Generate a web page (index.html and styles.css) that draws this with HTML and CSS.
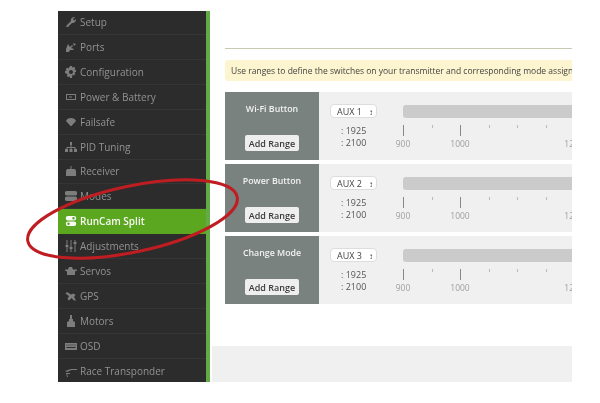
FILE: index.html
```html
<!DOCTYPE html>
<html lang="en">
<head>
<meta charset="utf-8">
<title>RunCam Split modes</title>
<link rel="stylesheet" href="styles.css">
</head>
<body>
<div class="frame">
  <nav class="sidebar">
    <div class="item"><svg class="icon" viewBox="0 0 12 12"><path d="M1 11l1-2 4-4c-.5-2 1-4 4-4L8 3l1 1.500L11 3c0 3-2 4.500-4 4l-4 4z"/></svg>Setup</div>
    <div class="item"><svg class="icon" viewBox="0 0 12 12"><path d="M1 11V8l2-5 2 3 2-2 1 1-2 2 3 1-1 1H5l-1 2z"/><path d="M8 2l3 1-2 2z"/></svg>Ports</div>
    <div class="item"><svg class="icon" viewBox="0 0 12 12"><path fill-rule="evenodd" d="M5 0h2l.4 1.700 1.500-.9 1.400 1.400-.9 1.500 1.600.4v2l-1.600.4.9 1.500-1.400 1.400-1.500-.9L7 12H5l-.4-1.700-1.500.9-1.400-1.400.9-1.500L0 7V5l1.600-.4-.9-1.500 1.400-1.400 1.500.9zM6 4a2 2 0 100 4 2 2 0 000-4z"/></svg>Configuration</div>
    <div class="item"><svg class="icon" viewBox="0 0 12 12"><path fill-rule="evenodd" d="M1 3h10v6H1zM2 4v4h8V4z"/><path d="M4 5.500h3v1H4z"/></svg>Power &amp; Battery</div>
    <div class="item"><svg class="icon" viewBox="0 0 12 12"><path d="M1 5c1-4 9-4 10 0l-4.500 5h-1z"/></svg>Failsafe</div>
    <div class="item"><svg class="icon" viewBox="0 0 12 12"><path d="M5 1h2v3H5zM5.500 4h1v2h4v2h-1V7h-3v1h-1V7h-3v1h-1V6h4z"/><path d="M0 8h3v3H0zM4.500 8h3v3h-3zM9 8h3v3H9z"/></svg>PID Tuning</div>
    <div class="item"><svg class="icon" viewBox="0 0 12 12"><path d="M5.500 1h1v3h-1z"/><path d="M2 4h8l1 2v5H1V6z"/></svg>Receiver</div>
    <div class="item"><svg class="icon" viewBox="0 0 12 12"><path d="M2 1h8a2 2 0 010 4.500H2a2 2 0 010-4.500zM2 6.500h8a2 2 0 010 4.500H2a2 2 0 010-4.500z"/></svg>Modes</div>
    <div class="item active"><svg class="icon" viewBox="0 0 12 12"><path fill-rule="evenodd" d="M3 1h6a2.200 2.200 0 010 4.500H3A2.200 2.200 0 013 1zM8.500 2a1.200 1.200 0 100 2.500 1.200 1.200 0 000-2.500zM3 6.500h6A2.200 2.200 0 019 11H3a2.200 2.200 0 010-4.500zM3.500 7.500a1.200 1.200 0 100 2.500 1.200 1.200 0 000-2.500z"/></svg>RunCam Split</div>
    <div class="item"><svg class="icon" viewBox="0 0 12 12"><path d="M1.500 0h1v5h1v2h-1v5h-1V7H.5V5h1zM5.500 0h1v7h1v2h-1v3h-1V9h-1V7h1zM9.500 0h1v2h1v2h-1v8h-1V4h-1V2h1z"/></svg>Adjustments</div>
    <div class="item"><svg class="icon" viewBox="0 0 12 12"><path d="M4 2h3l1 2.500h4v1l-2 1V10H2V6.500l-2-1v-1h3z"/></svg>Servos</div>
    <div class="item"><svg class="icon" viewBox="0 0 12 12"><path d="M2 2l4 2.500 2.500-1L10.500 5 9 7l2 3.500H9L6.500 8 4 10.500 2.500 9 4 6 .5 3.500z"/></svg>GPS</div>
    <div class="item"><svg class="icon" viewBox="0 0 12 12"><path d="M5 0h2v4h1v2l2 1v5H2V7l2-1V4h1z"/></svg>Motors</div>
    <div class="item"><svg class="icon" viewBox="0 0 12 12"><path fill-rule="evenodd" d="M0 3h12v7H0zM1.500 4.500v1h1v-1zM3.500 4.500v1h1v-1zM5.500 4.500v1h1v-1zM7.500 4.500v1h1v-1zM9.500 4.500v1h1v-1zM1.500 7v1h9V7z"/></svg>OSD</div>
    <div class="item"><svg class="icon" viewBox="0 0 12 12"><path d="M0 6l6-2h6v1H6.500L2 7zM1 8h4v1H2l1 3H2z"/></svg>Race Transponder</div>
  </nav>
  <main class="content">
    <div class="body">
      <div class="rule"></div>
      <div class="note">Use ranges to define the switches on your transmitter and corresponding mode assignments</div>
      <section class="mode">
        <div class="mode-head"><span class="mode-name">Wi-Fi Button</span><button class="add">Add Range</button></div>
        <div class="mode-body">
          <div class="controls"><div class="select">AUX 1<span class="arrows">&#8597;</span></div><div class="vals"><span>: 1925</span><span>: 2100</span></div></div>
          <div class="scale">
            <div class="track"></div>
            <div class="ticks"><i class="long"></i><i></i><i class="long"></i><i></i><i></i><i></i></div>
            <div class="labels"><span>900</span><span>1000</span><span class="skip"></span><span>1200</span></div>
          </div>
        </div>
      </section>
      <section class="mode">
        <div class="mode-head"><span class="mode-name">Power Button</span><button class="add">Add Range</button></div>
        <div class="mode-body">
          <div class="controls"><div class="select">AUX 2<span class="arrows">&#8597;</span></div><div class="vals"><span>: 1925</span><span>: 2100</span></div></div>
          <div class="scale">
            <div class="track"></div>
            <div class="ticks"><i class="long"></i><i></i><i class="long"></i><i></i><i></i><i></i></div>
            <div class="labels"><span>900</span><span>1000</span><span class="skip"></span><span>1200</span></div>
          </div>
        </div>
      </section>
      <section class="mode">
        <div class="mode-head"><span class="mode-name">Change Mode</span><button class="add">Add Range</button></div>
        <div class="mode-body">
          <div class="controls"><div class="select">AUX 3<span class="arrows">&#8597;</span></div><div class="vals"><span>: 1925</span><span>: 2100</span></div></div>
          <div class="scale">
            <div class="track"></div>
            <div class="ticks"><i class="long"></i><i></i><i class="long"></i><i></i><i></i><i></i></div>
            <div class="labels"><span>900</span><span>1000</span><span class="skip"></span><span>1200</span></div>
          </div>
        </div>
      </section>
    </div>
    <div class="footer"></div>
  </main>
</div>
<svg class="oval" viewBox="0 0 600 403" aria-hidden="true"><ellipse cx="132.500" cy="219" rx="107" ry="33" transform="rotate(-12 132.500 219)"/></svg>
</body>
</html>
```

FILE: styles.css
```css
* { box-sizing: border-box; }
html, body { margin: 0; height: 403px; background: #fff; overflow: hidden; }
body { position: relative; font-family: "Open Sans", sans-serif; }

.frame {
  display: flex;
  width: 514px;
  height: 371px;
  margin: 11px 0 0 58px;
  overflow: hidden;
  filter: blur(0.5px);
}

.sidebar {
  flex: 0 0 152px;
  background: #2c2c2c;
  border-right: 4px solid #62ab45;
  overflow: hidden;
}
.item {
  display: flex;
  align-items: center;
  gap: 3px;
  height: 24.93px;
  padding-left: 7px;
  font-size: 10px;
  color: #929292;
  border-bottom: 1px solid #353535;
  white-space: nowrap;
  position: relative;
  top: -1px;
}
.item.active { background: #5ba71f; color: #f7f9f3; font-weight: 600; border-bottom-color: #5ba71f; }
.icon { flex: 0 0 12px; width: 12px; height: 12px; fill: currentColor; opacity: .8; }
.active .icon { opacity: 1; }

.content {
  flex: 1;
  min-width: 0;
  display: flex;
  flex-direction: column;
  overflow: hidden;
}
.body { flex: 1; padding: 37px 0 0 15px; width: 362px; }
.rule { height: 1px; background: #c5ccb4; margin-bottom: 11px; }
.note {
  height: 21px;
  line-height: 21px;
  padding-left: 6px;
  background: #fcf5cf;
  border-radius: 3px 0 0 3px;
  font-size: 8.500px;
  color: #444;
  white-space: nowrap;
  overflow: hidden;
  margin-bottom: 11px;
}

.mode {
  display: flex;
  height: 68px;
  margin-bottom: 4px;
  background: #f0f0f0;
  overflow: hidden;
}
.mode-head {
  flex: 0 0 94px;
  background: #7a8280;
  display: flex;
  flex-direction: column;
  align-items: center;
  padding-top: 11px;
}
.mode-name { font-size: 8.800px; font-weight: 600; color: #f0f2f1; line-height: 12px; }
.add {
  margin-top: 20px;
  width: 54px;
  height: 16px;
  padding: 0;
  border: 0;
  border-radius: 2px;
  background: #eee;
  font-family: inherit;
  font-size: 9px;
  font-weight: 600;
  color: #3a3a3a;
}
.mode-body { flex: 1; display: flex; min-width: 0; padding-left: 11px; }
.controls { flex: 0 0 73px; padding-top: 12px; }
.select {
  display: flex;
  align-items: center;
  justify-content: space-between;
  width: 47px;
  height: 14px;
  padding: 0 3px 0 6px;
  background: #fff;
  border: 1px solid #ddd;
  border-radius: 4px;
  font-size: 9px;
  color: #444;
}
.arrows { font-size: 8px; color: #333; font-weight: 700; }
.vals {
  display: flex;
  flex-direction: column;
  margin: 7px 0 0 11px;
  font-size: 9px;
  line-height: 12px;
  color: #555;
}
.scale { flex: 1; min-width: 0; padding-top: 13px; }
.track { height: 13px; background: #cbcbcb; border-radius: 3px 0 0 3px; }
.ticks { display: flex; height: 13px; margin-top: 7px; }
.ticks i { flex: 0 0 28.500px; display: block; }
.ticks i::before { content: ""; display: block; width: 1px; height: 3px; background: #bbb; }
.ticks i.long::before { height: 11px; background: #888; }
.labels { display: flex; margin: 0 0 0 -28.500px; font-size: 8.500px; line-height: 11px; color: #a0a0a0; }
.labels span { flex: 0 0 57px; text-align: center; }

.footer { flex: 0 0 36px; margin-left: 2px; background: #f0f0f0; }

.oval { position: absolute; left: 0; top: 0; width: 600px; height: 403px; pointer-events: none; }
.oval ellipse { fill: none; stroke: #bf1d22; stroke-width: 3; }
```
